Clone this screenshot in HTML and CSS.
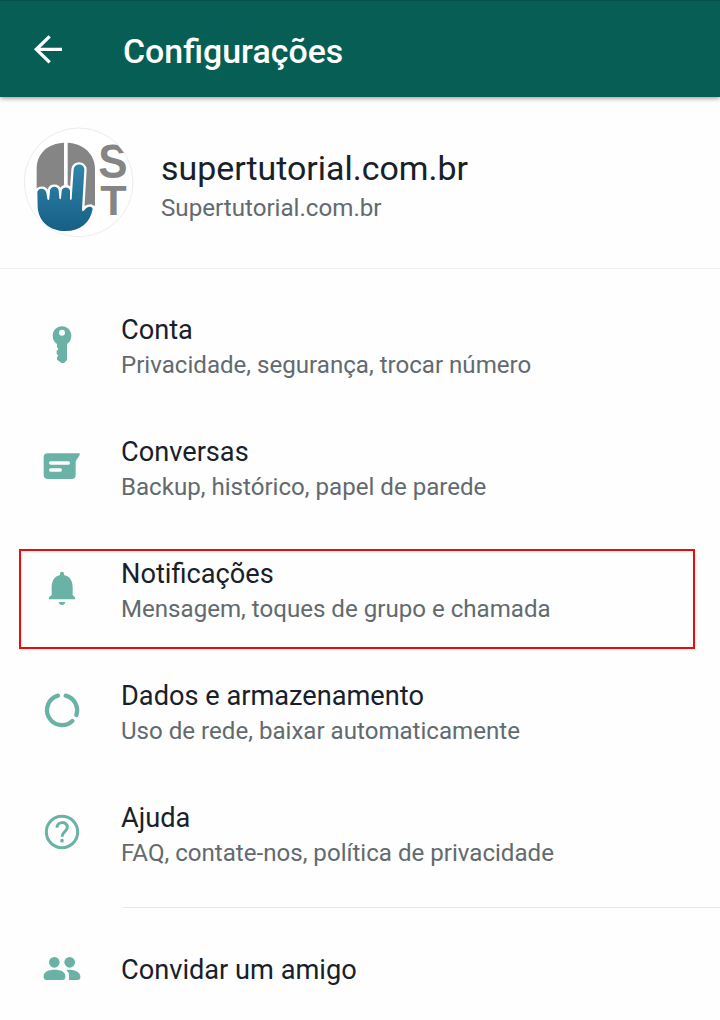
FILE: index.html
```html
<!DOCTYPE html>
<html lang="pt-BR">
<head>
<meta charset="utf-8">
<title>Configurações</title>
<link rel="stylesheet" href="styles.css">
</head>
<body>
<header class="bar">
  <svg class="back" viewBox="96 99 96 96"><path d="M186 148H109M149 109L109 148L149 187"/></svg>
  <h1 class="bar-title">Configurações</h1>
</header>
<section class="profile">
  <svg class="avatar" viewBox="0 0 390 375">
    <defs>
      <clipPath id="face"><circle cx="191" cy="187" r="162"/></clipPath>
      <linearGradient id="blue" gradientUnits="userSpaceOnUse" x1="0" y1="130" x2="0" y2="333"><stop offset="0" stop-color="#3186ae"/><stop offset="1" stop-color="#165f84"/></linearGradient>
    </defs>
    <circle class="avatar-ring" cx="191" cy="187" r="163"/>
    <g clip-path="url(#face)">
      <path class="grey" d="M147 68V210H65V145C65 100 99 70 147 68Z"/>
      <path class="grey" d="M158 68C205 70 240 102 240 148V257H158Z"/>
      <path class="hand" d="M67 218C67 203 91 202 94 218L97 236C98 241 102 241 103 236L105 211C108 197 128 197 131 211L133 234C134 239 137 239 138 234L140 212C143 199 162 199 165 212L165 236C166 241 169 241 170 236L176 148C178 128 208 129 208 149L201 268C201 275 204 275 209 269C218 257 231 258 233 267C225 310 195 333 152 333C103 333 72 304 68 263Z"/>
      <text class="logo-text"><tspan x="250" y="173" font-size="142" textLength="88" lengthAdjust="spacingAndGlyphs">S</tspan><tspan x="256" y="285" font-size="128" textLength="79" lengthAdjust="spacingAndGlyphs">T</tspan></text>
    </g>
  </svg>
  <div>
    <div class="name">supertutorial.com.br</div>
    <div class="status">Supertutorial.com.br</div>
  </div>
</section>
<main class="list">
  <div class="row">
    <svg class="icon" viewBox="0 0 210 210"><path fill-rule="evenodd" d="M96 49C112 49 124 62 124 77C124 88 119 97 111 102V150L102 159H95L81 149V142L85 137L80 131V123L85 117L81 111V102C73 97 68 88 68 77C68 62 80 49 96 49ZM96 59A9 9 0 1 0 96 77A9 9 0 1 0 96 59Z"/></svg>
    <div><div class="title">Conta</div><div class="sub">Privacidade, segurança, trocar número</div></div>
  </div>
  <div class="row">
    <svg class="icon" viewBox="0 6 210 210"><path d="M53 70H147Q152 70 149 75L137 94V134Q137 147 124 147H54Q41 147 41 134V82Q41 70 53 70Z"/><path class="cut" d="M62 99H115M62 120H91"/></svg>
    <div><div class="title">Conversas</div><div class="sub">Backup, histórico, papel de parede</div></div>
  </div>
  <div class="row highlighted">
    <svg class="icon" viewBox="60 42 210 210"><path d="M156 95Q162 95 162 102V105C180 109 188 123 188 142V165L195 172V178H117V172L125 165V142C125 123 133 109 150 105V102Q150 95 156 95ZM146 186H166Q164 195 156 195Q148 195 146 186Z"/></svg>
    <div><div class="title">Notificações</div><div class="sub">Mensagem, toques de grupo e chamada</div></div>
  </div>
  <div class="row">
    <svg class="icon line data" viewBox="0 3 210 210"><path d="M84 62A45 45 0 1 0 127 138M107 62A45 45 0 0 1 139 120"/></svg>
    <div><div class="title">Dados e armazenamento</div><div class="sub">Uso de rede, baixar automaticamente</div></div>
  </div>
  <div class="row">
    <svg class="icon line" viewBox="0 0 210 210"><circle cx="96" cy="102" r="47"/><path d="M81 89C81 69 112 69 112 88C112 101 96 101 96 116"/><circle class="dot" cx="96" cy="128" r="5.5"/></svg>
    <div><div class="title">Ajuda</div><div class="sub">FAQ, contate-nos, política de privacidade</div></div>
  </div>
</main>
<div class="divider"></div>
<div class="row invite">
  <svg class="icon" viewBox="0 0 210 210"><circle cx="73" cy="82" r="16"/><circle cx="119" cy="82" r="16"/><path d="M41 123C41 110 56 104 74 104S106 110 106 123V126Q106 135 97 135H50Q41 135 41 126ZM109 105C132 101 151 111 151 124V127Q151 135 143 135H117V123Q117 111 109 105Z"/></svg>
  <div class="title">Convidar um amigo</div>
</div>
</body>
</html>
```
FILE: styles.css
```css
*, *::after { box-sizing: border-box; }
body {
  margin: 0;
  height: 1020px;
  overflow: hidden;
  background: #fefefe;
  color: #17212a;
  font-family: Roboto, "Liberation Sans", sans-serif;
}
.bar {
  display: flex;
  align-items: center;
  height: 97px;
  padding: 0 32px;
  gap: 59px;
  background: #075e54;
  border-top: 1px solid #054f46;
  box-shadow: 0 1px 5px rgba(0, 0, 0, .45);
}
.back {
  width: 32px;
  height: 32px;
  fill: none;
  stroke: #fff;
  stroke-width: 10;
}
.bar-title {
  margin: 6px 0 0;
  color: #fff;
  font-size: 33.9px;
  line-height: 40px;
  font-weight: 500;
}
.profile {
  display: flex;
  height: 172px;
  padding: 23px 0 0 15px;
  gap: 16px;
  border-bottom: 1px solid #eee;
}
.avatar { width: 130px; height: 125px; }
.avatar-ring { fill: #fff; stroke: #ececec; stroke-width: 3; }
.grey { fill: #858585; }
.hand {
  fill: url(#blue);
  stroke: #fff;
  stroke-width: 14;
  paint-order: stroke;
}
.logo-text {
  fill: #858585;
  font-family: "Liberation Sans", sans-serif;
  font-weight: bold;
}
.name {
  margin-top: 29px;
  font-size: 33.9px;
  line-height: 40px;
}
.status {
  margin-top: 5px;
  color: #626a6e;
  font-size: 24.15px;
  line-height: 28px;
}
.list { padding-top: 15px; }
.row {
  display: flex;
  align-items: center;
  height: 122px;
  padding-left: 30px;
  gap: 21px;
}
.icon {
  width: 70px;
  height: 70px;
  fill: #69b2a5;
}
.cut {
  fill: none;
  stroke: #fff;
  stroke-width: 10;
  stroke-linecap: round;
}
.line { fill: none; stroke: #69b2a5; stroke-width: 9; }
.data { stroke-width: 13; stroke-linecap: round; }
.dot { fill: #69b2a5; stroke: none; }
.title {
  padding-top: 2px;
  font-size: 27.2px;
  line-height: 34px;
}
.sub {
  margin-top: 3px;
  color: #626a6e;
  font-size: 24.1px;
  line-height: 30px;
}
.highlighted { position: relative; }
.highlighted::after {
  content: "";
  position: absolute;
  left: 19px;
  top: 21px;
  width: 676px;
  height: 100px;
  border: 2px solid #f80606;
}
.divider {
  height: 1px;
  margin: 13px 0 0 123px;
  background: #e5e5e5;
}
.invite { height: 124px; }
.invite .title { padding-top: 0; }
```
